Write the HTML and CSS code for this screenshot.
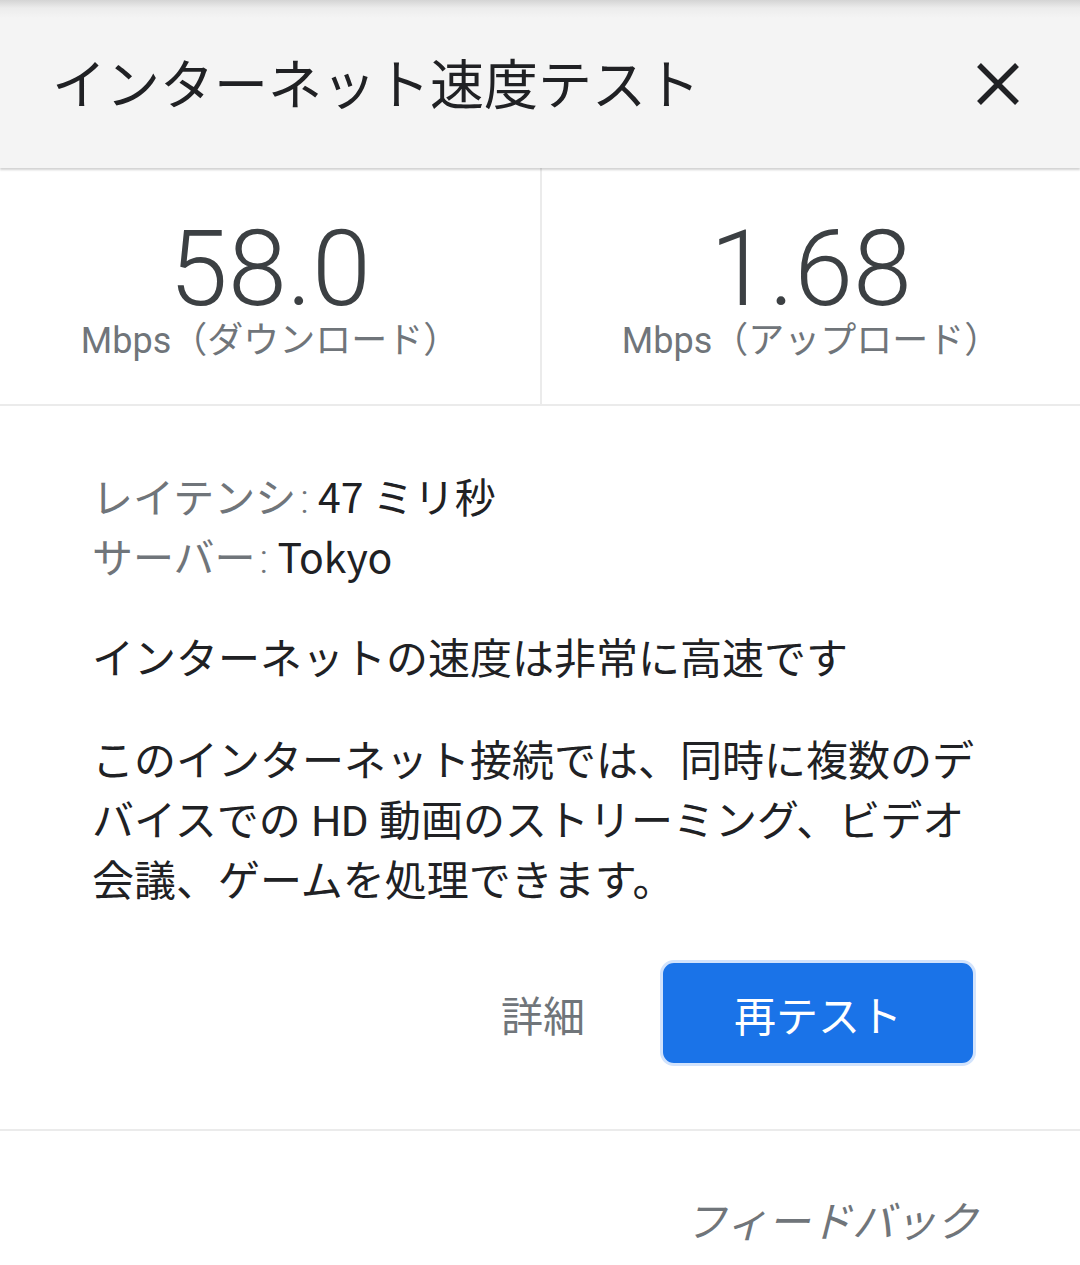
FILE: index.html
```html
<!DOCTYPE html>
<html lang="ja">
<head>
<meta charset="utf-8">
<link rel="stylesheet" href="styles.css">
</head>
<body>
<div class="page">
  <header class="header">
    <h1 class="title">インターネット速度テスト</h1>
    <svg class="close" viewBox="0 0 44 44" width="44" height="44"><path d="M3 3 L41 41 M41 3 L3 41" stroke="#202124" stroke-width="5.5" fill="none"/></svg>
  </header>
  <section class="stats">
    <div class="stat">
      <div class="num">58.0</div>
      <div class="unit">Mbps（ダウンロード）</div>
    </div>
    <div class="stat">
      <div class="num">1.68</div>
      <div class="unit">Mbps（アップロード）</div>
    </div>
  </section>
  <section class="info">
    <div class="meta">
      <div class="row"><span class="lbl">レイテンシ<span class="colon">:</span></span> 47 ミリ秒</div>
      <div class="row"><span class="lbl">サーバー<span class="colon">:</span></span> Tokyo</div>
    </div>
    <p class="status">インターネットの速度は非常に高速です</p>
    <p class="desc">このインターネット接続では、同時に複数のデバイスでの HD 動画のストリーミング、ビデオ会議、ゲームを処理できます。</p>
    <div class="actions">
      <span class="details">詳細</span>
      <button class="retest">再テスト</button>
    </div>
  </section>
  <footer class="footer">
    <span class="feedback">フィードバック</span>
  </footer>
</div>
</body>
</html>
```

FILE: styles.css
```css
html, body { margin: 0; padding: 0; background: #fff; }
body {
  font-family: Roboto, "Noto Sans CJK JP", sans-serif;
  color: #202124;
  width: 1080px;
}
.header {
  height: 168px;
  background: linear-gradient(#d4d4d4 0, #ececec 8px, #f4f4f4 18px);
  display: flex;
  align-items: center;
  justify-content: space-between;
  padding: 0 60px 0 52px;
  box-shadow: 0 2px 2px rgba(0,0,0,0.18);
  position: relative;
}
.title {
  margin: 0 0 6px;
  font-weight: 400;
  font-size: 54px;
  color: #202124;
}
.close { display: block; }
.stats {
  display: grid;
  grid-template-columns: 540px 1fr;
  height: 236px;
  border-bottom: 2px solid #ebebeb;
}
.stat {
  display: flex;
  flex-direction: column;
  align-items: center;
  padding-top: 51px;
}
.stat + .stat { border-left: 2px solid #ebebeb; }
.num {
  font-family: Roboto, sans-serif;
  font-weight: 300;
  font-size: 106px;
  line-height: 100px;
  color: #3c4043;
}
.unit {
  font-size: 36px;
  line-height: 44px;
  color: #70757a;
}
.info {
  padding: 59px 0 0 92px;
  height: 725px;
  box-sizing: border-box;
  border-bottom: 2px solid #ebebeb;
}
.meta {
  font-family: "Noto Sans CJK JP", sans-serif;
  font-size: 41px;
  line-height: 60px;
  color: #202124;
}
.row { height: 60px; }
.lbl { color: #70757a; }
.colon {
  font-family: Roboto, sans-serif;
  font-weight: 300;
  line-height: 1;
  margin-left: 4px;
}
.status {
  margin: 45px 0 0;
  font-size: 42px;
  line-height: 60px;
}
.desc {
  margin: 42px 0 0;
  width: 900px;
  font-size: 42px;
  line-height: 60px;
}
.actions {
  display: flex;
  align-items: center;
  justify-content: flex-end;
  gap: 75px;
  margin-top: 48px;
  padding-right: 104px;
}
.details {
  font-size: 42px;
  color: #70757a;
}
.retest {
  width: 316px;
  height: 106px;
  border-radius: 14px;
  background: #1a73e8;
  border: 3px solid #d2e3fc;
  color: #fff;
  font-family: Roboto, "Noto Sans CJK JP", sans-serif;
  font-size: 42px;
  padding: 0;
}
.footer {
  display: flex;
  justify-content: flex-end;
  padding: 62px 102px 0 0;
}
.feedback {
  font-size: 42px;
  line-height: 60px;
  color: #70757a;
  font-style: italic;
}
```
